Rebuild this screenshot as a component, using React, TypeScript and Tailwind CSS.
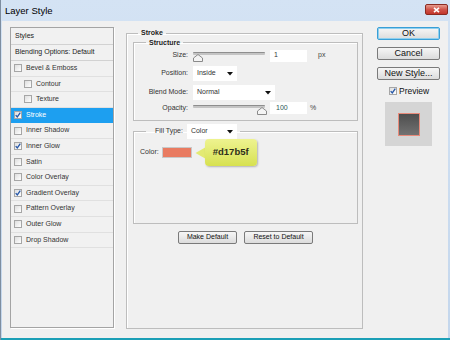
import React from "react";

interface StyleItem {
  name: string;
  checked?: boolean;
  indent?: boolean;
  active?: boolean;
}

const styleItems: StyleItem[] = [
  { name: "Bevel & Emboss" },
  { name: "Contour", indent: true },
  { name: "Texture", indent: true },
  { name: "Stroke", checked: true, active: true },
  { name: "Inner Shadow" },
  { name: "Inner Glow", checked: true },
  { name: "Satin" },
  { name: "Color Overlay" },
  { name: "Gradient Overlay", checked: true },
  { name: "Pattern Overlay" },
  { name: "Outer Glow" },
  { name: "Drop Shadow" },
];

function CheckBox({ checked }: { checked?: boolean }) {
  return (
    <span className="w-[8px] h-[8px] shrink-0 border border-[#a6a6a6] bg-gradient-to-br from-[#dedede] to-white flex items-center justify-center">
      {checked && (
        <svg width="6" height="6" viewBox="0 0 6 6">
          <path d="M0.7 3.1 L2.3 4.9 L5.3 0.7" stroke="#2456a8" strokeWidth="1.3" fill="none" />
        </svg>
      )}
    </span>
  );
}

function Slider({ value }: { value: "min" | "max" }) {
  return (
    <div className="relative w-[72px] h-[10px]">
      <div className="mt-[1px] h-[3px] rounded-[1px] bg-[#c4c4c4] border-t border-[#8e8e8e] border-b-white" />
      <svg
        width="10"
        height="8"
        viewBox="0 0 10 8"
        className={value === "min" ? "absolute left-0 top-[2px]" : "absolute right-[-2px] top-[2px]"}
      >
        <path d="M0.5 7.5 V4 L5 0.5 L9.5 4 V7.5 Z" fill="#f4f4f4" stroke="#8a8a8a" strokeWidth="1" />
      </svg>
    </div>
  );
}

function Dropdown({ label, width }: { label: string; width: string }) {
  return (
    <div className={`${width} h-[15px] bg-white flex items-center justify-between pl-[4px] pr-[4px]`}>
      <span>{label}</span>
      <svg width="6" height="4" viewBox="0 0 6 4">
        <path d="M0 0 H6 L3 3.5 Z" fill="#111" />
      </svg>
    </div>
  );
}

function Button({ children, focused }: { children: React.ReactNode; focused?: boolean }) {
  return (
    <div
      className={`h-[13px] flex items-center justify-center rounded-[2px] border bg-gradient-to-b from-[#f6f6f6] to-[#dcdcdc] text-[9px] text-[#111] ${
        focused ? "border-[#3a9fd6] shadow-[inset_0_0_0_1px_#8fd0ef]" : "border-[#7a7a7a]"
      }`}
    >
      {children}
    </div>
  );
}

export default function App() {
  return (
    <div className="w-[450px] h-[340px] flex flex-col bg-gradient-to-b from-[#d4e3f4] to-[#c3d6ec] border-l border-[#7e8ea0] [font-family:'Liberation_Sans',Arial,sans-serif] text-[#333] overflow-hidden">
      {/* title bar */}
      <div className="h-[21px] shrink-0 flex justify-between">
        <span className="pl-[4px] pt-[4px] text-[9.5px] text-black">Layer Style</span>
        <div className="mt-[4px] mr-[2px] w-[23px] h-[11px] rounded-[2px] border border-[#8a2b22] bg-gradient-to-b from-[#e59a8e] via-[#d0544a] to-[#c2362b] flex items-center justify-center">
          <svg width="7" height="6" viewBox="0 0 7 6">
            <path d="M1 0.8 L6 5.2 M6 0.8 L1 5.2" stroke="#fff" strokeWidth="1.6" />
          </svg>
        </div>
      </div>

      <div className="flex-1 mr-[2px] ml-[1px] bg-[#f0f0f0] flex pt-[6px] pb-[10px] pl-[8px] pr-[8px] text-[7px]">
        {/* styles list */}
        <div className="w-[104px] border border-[#a4a4a4] shadow-[1px_1px_0_#fff] bg-[#f1f1f1] flex flex-col">
          <div className="h-[17px] flex items-center pl-[4px] border-b border-[#d2d2d2] text-[#222]">Styles</div>
          <div className="h-[16px] flex items-center pl-[4px] border-b border-[#d2d2d2] text-[#222]">
            Blending Options: Default
          </div>
          {styleItems.map((item) => (
            <div
              key={item.name}
              className={`h-[15.6px] flex items-center gap-[4px] border-b ${
                item.indent ? "pl-[13px]" : "pl-[3px]"
              } ${item.active ? "bg-[#1d9ff0] text-white border-[#1d9ff0]" : "border-[#e0e0e0]"}`}
            >
              <CheckBox checked={item.checked} />
              <span>{item.name}</span>
            </div>
          ))}
        </div>

        {/* stroke panel */}
        <fieldset className="ml-[12px] w-[237px] mt-[1px] -mb-[1px] border border-[#bdbdbd] shadow-[inset_1px_1px_0_#fff] pl-[6px] pr-[4px] flex flex-col">
          <legend className="ml-[5px] px-[3px] leading-[10px] font-bold text-[7px] text-[#222]">Stroke</legend>

          <fieldset className="border border-[#bdbdbd] shadow-[inset_1px_1px_0_#fff] pb-[6px]">
            <legend className="ml-[12px] px-[3px] leading-[9px] font-bold text-[7px] text-[#222]">Structure</legend>
            <div className="flex items-center h-[13px] mt-[2px]">
              <span className="w-[54px] text-right">Size:</span>
              <div className="ml-[5px] pt-[2px]">
                <Slider value="min" />
              </div>
              <div className="ml-[5px] w-[37px] h-[12px] bg-white pl-[4px] flex items-center">1</div>
              <span className="ml-[11px] text-[#444]">px</span>
            </div>
            <div className="flex items-center h-[15px] mt-[4px]">
              <span className="w-[54px] text-right">Position:</span>
              <div className="ml-[5px]">
                <Dropdown label="Inside" width="w-[44px]" />
              </div>
            </div>
            <div className="flex items-center h-[15px] mt-[4px]">
              <span className="w-[54px] text-right">Blend Mode:</span>
              <div className="ml-[5px]">
                <Dropdown label="Normal" width="w-[82px]" />
              </div>
            </div>
            <div className="flex items-center h-[12px] mt-[2px]">
              <span className="w-[54px] text-right">Opacity:</span>
              <div className="ml-[5px] pt-[2px]">
                <Slider value="max" />
              </div>
              <div className="ml-[5px] w-[37px] h-[12px] bg-white pl-[6px] flex items-center text-[#2d5a55]">100</div>
              <span className="ml-[3px] text-[#444]">%</span>
            </div>
          </fieldset>

          <fieldset className="mt-[3px] border border-[#bdbdbd] shadow-[inset_1px_1px_0_#fff] pl-[6px] pb-[57px]">
            <legend className="ml-[6px] pl-[9px] pr-[3px] flex items-center">
              <span>Fill Type:</span>
              <div className="ml-[4px]">
                <Dropdown label="Color" width="w-[50px]" />
              </div>
            </legend>
            <div className="flex items-center h-[27px]">
              <span>Color:</span>
              <div className="ml-[3px] w-[30px] h-[11px] bg-[#e97b61] border border-[#c8c8c8]" />
              <svg width="11" height="14" viewBox="0 0 11 14" className="ml-[3px] -mr-[1px]">
                <path d="M11 1 L0.5 7 L11 13 Z" fill="#e3ea73" />
              </svg>
              <div className="w-[52px] h-[27px] rounded-[4px] bg-gradient-to-b from-[#eef38f] to-[#d7e14f] shadow-[1px_1px_2px_rgba(0,0,0,0.25)] flex items-center justify-center text-[9.5px] font-bold text-[#2e2e1a]">
                #d17b5f
              </div>
            </div>
          </fieldset>

          <div className="mt-[7px] flex justify-center gap-[7px]">
            <div className="w-[59px]">
              <Button>
                <span className="text-[7px]">Make Default</span>
              </Button>
            </div>
            <div className="w-[69px]">
              <Button>
                <span className="text-[7px]">Reset to Default</span>
              </Button>
            </div>
          </div>
        </fieldset>

        {/* buttons column */}
        <div className="ml-[14px] w-[63px] flex flex-col">
          <Button focused>OK</Button>
          <div className="mt-[7px]">
            <Button>Cancel</Button>
          </div>
          <div className="mt-[7px]">
            <Button>New Style...</Button>
          </div>
          <div className="mt-[6px] h-[10px] pl-[12px] flex items-center gap-[2px] text-[8.5px] text-[#111]">
            <CheckBox checked />
            <span>Preview</span>
          </div>
          <div className="mt-[6px] ml-[8px] w-[47px] h-[44px] bg-[#d5d5d5] flex items-center justify-center">
            <div className="w-[22px] h-[23px] border border-[#e88a7a] bg-gradient-to-b from-[#4e4e4e] to-[#727272]" />
          </div>
        </div>
      </div>
      <div className="h-[2px] shrink-0 bg-[#1b9fb6]" />
    </div>
  );
}
